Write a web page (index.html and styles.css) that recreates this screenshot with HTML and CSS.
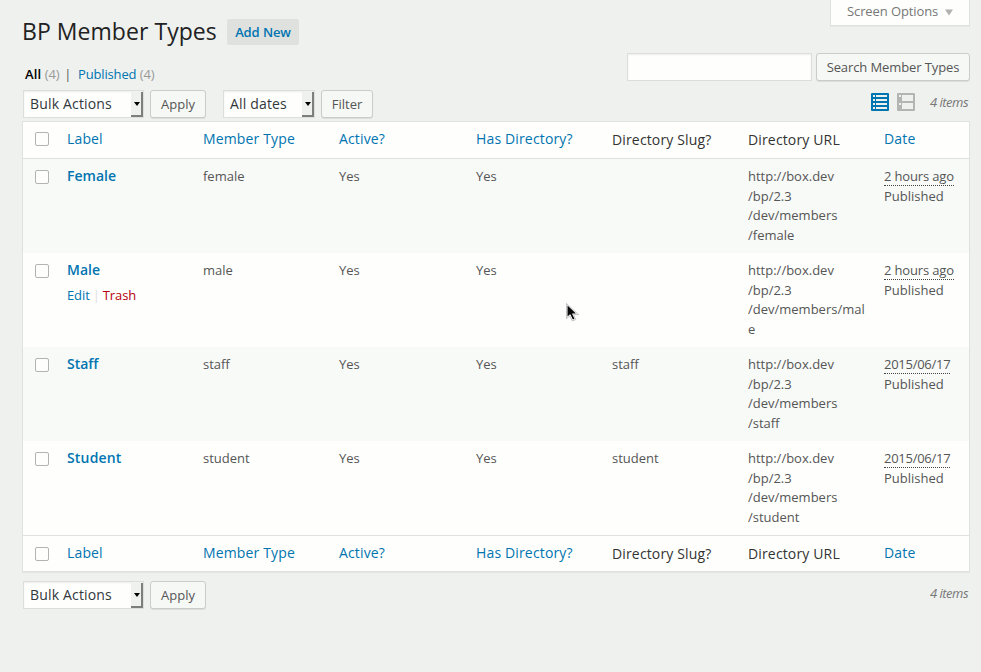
FILE: index.html
```
<!DOCTYPE html>
<html lang="en">
<head>
<meta charset="utf-8">
<title>BP Member Types</title>
<link rel="stylesheet" href="styles.css">
</head>
<body>
<main class="page">
  <header class="top">
    <div class="heading"><h1>BP Member Types</h1><a class="add-new">Add New</a></div>
    <div class="screen-options">Screen Options <svg width="8" height="7" viewBox="0 0 8 7"><path d="M0 0.500h8L4 6.500z" fill="#b0b2b0"/></svg></div>
  </header>
  <div class="filters">
    <div class="views"><b>All</b> <span class="count">(4)</span><span class="bar">|</span><a>Published</a> <span class="count">(4)</span></div>
    <div class="search"><input type="text" class="search-box"><button class="button search-button">Search Member Types</button></div>
  </div>
  <div class="tablenav">
    <div class="select bulk"><span>Bulk Actions</span><i class="arrow"></i></div>
    <button class="button apply">Apply</button>
    <div class="select dates"><span>All dates</span><i class="arrow"></i></div>
    <button class="button filter">Filter</button>
    <div class="modes">
      <svg width="18" height="18" viewBox="0 0 18 18"><rect width="18" height="18" rx="1" fill="#0074b0"/><path d="M2 2h2v2H2zM5 2h11v2H5zM2 6h2v2H2zM5 6h11v2H5zM2 10h2v2H2zM5 10h11v2H5zM2 14h2v2H2zM5 14h11v2H5z" fill="#eff1ef"/></svg>
      <svg width="18" height="18" viewBox="0 0 18 18"><rect width="18" height="18" rx="1" fill="#b3b5b3"/><path d="M2 2h2v2H2zM5 2h11v6H5zM2 10h2v2H2zM5 10h11v6H5z" fill="#eff1ef"/></svg>
    </div>
    <span class="items">4 items</span>
  </div>
  <section class="table">
    <div class="row head"><i class="check"></i><a>Label</a><a>Member Type</a><a>Active?</a><a>Has Directory?</a><span>Directory Slug?</span><span>Directory URL</span><a>Date</a></div>
    <div class="row alt"><i class="check"></i><div><a class="name">Female</a></div><div>female</div><div>Yes</div><div>Yes</div><div></div><div>http://box.dev<br>/bp/2.3<br>/dev/members<br>/female</div><div><abbr>2 hours ago</abbr><br>Published</div></div>
    <div class="row"><i class="check"></i><div><a class="name">Male</a><div class="actions"><a>Edit</a><span>|</span><a class="trash">Trash</a></div></div><div>male</div><div>Yes</div><div>Yes</div><div></div><div>http://box.dev<br>/bp/2.3<br>/dev/members/mal<br>e</div><div><abbr>2 hours ago</abbr><br>Published</div></div>
    <div class="row alt"><i class="check"></i><div><a class="name">Staff</a></div><div>staff</div><div>Yes</div><div>Yes</div><div>staff</div><div>http://box.dev<br>/bp/2.3<br>/dev/members<br>/staff</div><div><abbr class="day">2015/06/17</abbr><br>Published</div></div>
    <div class="row"><i class="check"></i><div><a class="name student">Student</a></div><div>student</div><div>Yes</div><div>Yes</div><div>student</div><div>http://box.dev<br>/bp/2.3<br>/dev/members<br>/student</div><div><abbr class="day">2015/06/17</abbr><br>Published</div></div>
    <div class="row head foot"><i class="check"></i><a>Label</a><a>Member Type</a><a>Active?</a><a>Has Directory?</a><span>Directory Slug?</span><span>Directory URL</span><a>Date</a></div>
  </section>
  <div class="tablenav bottom">
    <div class="select bulk"><span>Bulk Actions</span><i class="arrow"></i></div>
    <button class="button apply">Apply</button>
    <span class="items">4 items</span>
  </div>
</main>
<svg class="cursor" width="14" height="20" viewBox="0 0 14 20"><path d="M1 1v14l3-2.800 2.600 5.300 2.800-1.300-2.500-4.900H12z" fill="#111" stroke="#fff" stroke-width="2.400" stroke-linejoin="round"/><path d="M.5.5v15l3.300-2.600L6.300 18l3.400-1.500L7.500 11.600H12.600z" fill="none" stroke="#aaa" stroke-width=".7"/><path d="M1.500 2.500v11l2.700-2.400 2.700 5.300 1.500-.7-2.500-5.100h4z" fill="#080808"/></svg>
</body>
</html>
```
FILE: styles.css
```
* { box-sizing: border-box; }
body {
  margin: 0;
  height: 672px;
  overflow: hidden;
  background: #eff1ef;
  color: #555;
  font: 13px/19.5px "Open Sans", sans-serif;
}
a { color: #0074b0; }
.page { padding: 0 11px 0 22px; }
.top { display: flex; justify-content: space-between; height: 53px; }
.heading { display: flex; align-items: flex-start; }
h1 {
  margin: 17px 10px 0 0;
  width: 195px;
  color: #222;
  font-size: 23px;
  font-weight: 400;
  letter-spacing: .05px;
  line-height: 29px;
  white-space: nowrap;
}
.add-new {
  margin-top: 19px;
  width: 72px;
  height: 26px;
  border-radius: 2px;
  background: #dfe1df;
  font-weight: 600;
  letter-spacing: -.1px;
  line-height: 26px;
  text-align: center;
}
.screen-options {
  width: 140px;
  height: 26px;
  padding-left: 16px;
  border: 1px solid #dfe1df;
  border-top: 0;
  background: #fefffd;
  box-shadow: 0 1px 0 #e6e8e6;
  color: #777;
  letter-spacing: -.1px;
  line-height: 23px;
  white-space: nowrap;
}
.screen-options svg { margin-left: 4px; }
.filters { display: flex; justify-content: space-between; height: 37px; }
.views { padding: 12px 0 0 3px; }
.views b { color: #000; font-weight: 600; letter-spacing: .2px; }
.views a { letter-spacing: -.15px; }
.count { color: #999; letter-spacing: -.2px; }
.bar { margin: 0 6.5px 0 5px; }
.search { display: flex; gap: 4px; }
.search-box {
  width: 185px;
  height: 28px;
  border: 1px solid #dcdedc;
  background: #fefffd;
  box-shadow: inset 0 1px 2px rgba(0,0,0,.07);
}
.button {
  height: 28px;
  padding: 0;
  border: 1px solid #caccca;
  border-radius: 3px;
  background: #f6f8f5;
  box-shadow: 0 1px 0 rgba(0,0,0,.08);
  color: #555;
  font: 13px/26px "Open Sans", sans-serif;
}
.search-button { width: 154px; letter-spacing: -.1px; }
.tablenav { display: flex; height: 31px; padding-left: 1px; }
.select {
  display: flex;
  justify-content: space-between;
  height: 28px;
  border: 1px solid #dcdedc;
  background: #fefffd;
  box-shadow: inset 0 1px 2px rgba(0,0,0,.07);
  color: #32373c;
  font-size: 14px;
  letter-spacing: .17px;
  line-height: 26px;
}
.select span { padding-left: 6px; }
.bulk { width: 121px; }
.dates { width: 92px; margin-left: 17px; }
.arrow {
  display: flex;
  align-items: center;
  justify-content: center;
  width: 12px;
  height: 25px;
  margin-top: 1px;
  padding-left: 1px;
  border: solid #7d7f7d;
  border-width: 0 2px 2px 0;
  background: #eff1ef;
}
.arrow::after {
  content: "";
  border: 3.5px solid transparent;
  border-top: 4px solid #000;
  border-bottom: 0;
}
.apply { width: 56px; margin-left: 6px; }
.filter { width: 52px; margin-left: 6px; }
.modes { display: flex; gap: 8px; margin: 3px 15px 0 auto; }
.items { width: 40px; color: #777; font-style: italic; letter-spacing: -.5px; line-height: 25px; white-space: nowrap; }
.bottom .items { margin-left: auto; }
.table { border: 1px solid #e0e2e0; background: #fefffd; box-shadow: 0 1px 1px rgba(0,0,0,.04); }
.row {
  display: grid;
  grid-template-columns: 44px 136px 136px 137px 136px 136px 136px 1fr;
  height: 94px;
  padding-top: 8px;
}
.alt { background: #f8faf8; }
.head {
  height: 37px;
  padding-top: 7px;
  border-bottom: 1px solid #dfe1df;
  color: #333;
  font-size: 14px;
  letter-spacing: .15px;
  line-height: 19px;
}
.head span { padding-top: 1px; }
.foot { height: 36px; border-top: 1px solid #dfe1df; border-bottom: 0; }
.check {
  width: 14px;
  height: 14px;
  margin: 3px 0 0 12px;
  border: 1px solid #b2b4b2;
  border-radius: 2px;
  background: #fefffd;
}
.foot .check { margin-top: 4px; }
.name { display: block; margin-top: -1px; font-size: 14px; font-weight: 600; line-height: 19px; }
.student { letter-spacing: .17px; }
.actions { padding-top: 7px; letter-spacing: -.1px; }
.actions span { margin: 0 3px; color: #ddd; }
.actions .trash { color: #b8000c; }
abbr { border-bottom: 1px dotted #444; letter-spacing: -.15px; }
.day { letter-spacing: -.27px; }
.bottom { padding-top: 9px; height: 37px; }
.cursor { position: absolute; left: 566px; top: 303px; }
```
